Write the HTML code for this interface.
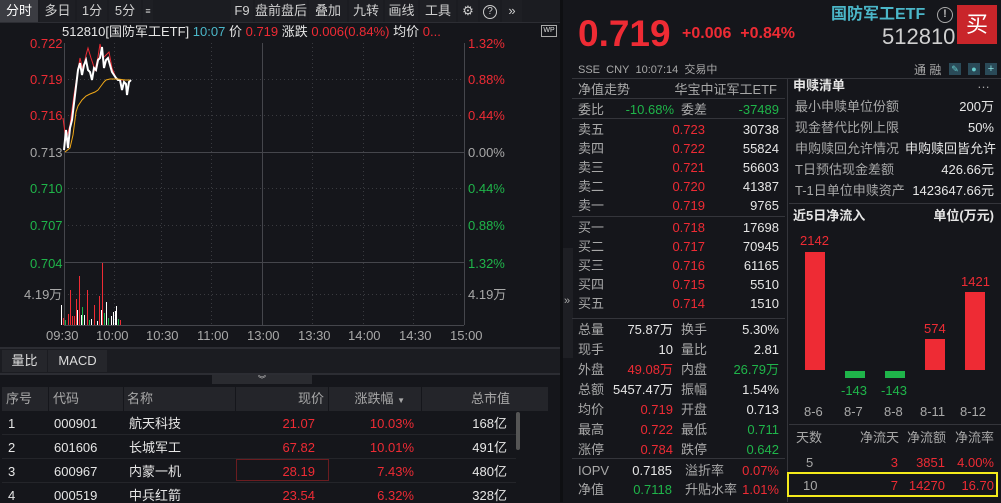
<!DOCTYPE html>
<html><head><meta charset="utf-8">
<style>
*{margin:0;padding:0;box-sizing:border-box}
body{width:1001px;height:502px;background:#15161b;font-family:"Liberation Sans","Noto Sans CJK SC",sans-serif;font-size:13px;color:#c8c8c8;position:relative;overflow:hidden}
.a{position:absolute;white-space:nowrap;line-height:1}
.r{color:#ee2b34}.g{color:#1fb54a}.w{color:#e6e6e6}.gr{color:#a8a8a8}.c{color:#4bb7c9}
.ra{text-align:right}
.hl{position:absolute;height:1px;background:#34353b}
.vl{position:absolute;width:1px;background:#34353b}
.btn{position:absolute;top:0;height:22px;line-height:22px;font-size:13px;color:#d0d0d0;text-align:center;background:#1e1f24}
</style></head><body>
<!-- toolbar -->
<div class="a" style="left:0;top:0;width:560px;height:22px;background:#1b1c21"></div>
<div class="btn" style="left:0;width:38px;background:#3b3c42;color:#fff">分时</div>
<div class="btn" style="left:40px;width:35px">多日</div>
<div class="btn" style="left:77px;width:30px">1分</div>
<div class="btn" style="left:109px;width:32px">5分</div>
<div class="btn" style="left:143px;width:10px;font-size:9px">≡</div>
<div class="btn" style="left:231px;width:22px">F9</div>
<div class="btn" style="left:255px;width:52px">盘前盘后</div>
<div class="btn" style="left:309px;width:38px">叠加</div>
<div class="btn" style="left:349px;width:34px">九转</div>
<div class="btn" style="left:385px;width:33px">画线</div>
<div class="btn" style="left:420px;width:36px">工具</div>
<div class="btn" style="left:458px;width:20px">⚙</div>
<div class="btn" style="left:480px;width:20px"><span style="display:inline-block;width:14px;height:14px;border:1px solid #ccc;border-radius:50%;line-height:12px;font-size:10px;vertical-align:middle">?</span></div>
<div class="btn" style="left:502px;width:20px">»</div>
<div class="a" style="left:0;top:22px;width:560px;height:1px;background:#2c2d33"></div>
<!-- chart header -->
<div class="a" style="left:62px;top:25px;font-size:13px"><span class="w">512810[国防军工ETF]</span> <span class="c">10:07</span> <span class="w">价</span> <span class="r">0.719</span> <span class="w">涨跌</span> <span class="r">0.006(0.84%)</span> <span class="w">均价</span> <span class="r">0...</span></div>
<div class="a" style="left:541px;top:25px;width:16px;height:12px;border:1px solid #aaa;font-size:7px;color:#ddd;text-align:center;line-height:10px">WP</div>
<!-- chart svg -->
<svg class="a" style="left:0;top:0" width="560" height="350">
<g stroke="#3a3b40" stroke-dasharray="1,3" stroke-width="1">
<line x1="64" y1="79.5" x2="464" y2="79.5"/><line x1="64" y1="115.5" x2="464" y2="115.5"/>
<line x1="64" y1="188.5" x2="464" y2="188.5"/><line x1="64" y1="225.5" x2="464" y2="225.5"/>
<line x1="64" y1="294.5" x2="464" y2="294.5"/>
<line x1="114.5" y1="43" x2="114.5" y2="325"/><line x1="161.5" y1="43" x2="161.5" y2="325"/><line x1="211.5" y1="43" x2="211.5" y2="325"/>
<line x1="312.5" y1="43" x2="312.5" y2="325"/><line x1="363.5" y1="43" x2="363.5" y2="325"/><line x1="413.5" y1="43" x2="413.5" y2="325"/>
</g>
<g stroke="#45464c" stroke-width="1">
<line x1="64" y1="152.5" x2="464" y2="152.5"/><line x1="64" y1="262.5" x2="464" y2="262.5"/>
<line x1="64" y1="325.5" x2="464" y2="325.5"/>
<line x1="64.5" y1="43" x2="64.5" y2="325"/><line x1="262.5" y1="43" x2="262.5" y2="325"/><line x1="464.5" y1="43" x2="464.5" y2="325"/>
</g>
<polyline fill="none" stroke="#ee2b34" stroke-width="1" points="63,118 66,140 70,125 74,95 78,70 80,58 83,70 86,55 88,48 91,58 95,70 98,57 100,44 103,58 106,55 109,52 112,68 116,78 120,80 124,80"/>
<polyline fill="none" stroke="#fff" stroke-width="2" points="64,150 66,130 68,148 70,128 72,120 75,95 78,70 80,63 82,75 84,65 86,60 88,70 90,72 92,80 94,68 96,70 98,60 100,58 102,47 104,68 106,60 108,58 110,65 112,72 114,75 116,78 118,80 120,80 122,90 124,82 126,84 127,95 129,82 131,80"/>
<polyline fill="none" stroke="#f0a818" stroke-width="1" points="65,152 70,148 73,135 76,112 78,106 82,100 86,96 90,94 95,92 98,90 101,86 104,82 106,80 110,79 118,79 125,80 130,80"/>
<g stroke-width="1">
<line x1="61.5" y1="305" x2="61.5" y2="325" stroke="#fff"/>
<line x1="63.5" y1="318" x2="63.5" y2="325" stroke="#ee2b34"/>
<line x1="65.5" y1="320" x2="65.5" y2="325" stroke="#1fb54a"/>
<line x1="68.5" y1="314" x2="68.5" y2="325" stroke="#ee2b34"/>
<line x1="70.5" y1="290" x2="70.5" y2="325" stroke="#ee2b34"/>
<line x1="72.5" y1="316" x2="72.5" y2="325" stroke="#ee2b34"/>
<line x1="74.5" y1="316" x2="74.5" y2="325" stroke="#ee2b34"/>
<line x1="76.5" y1="299" x2="76.5" y2="325" stroke="#ee2b34"/>
<line x1="77.5" y1="310" x2="77.5" y2="325" stroke="#fff"/>
<line x1="79.5" y1="276" x2="79.5" y2="325" stroke="#ee2b34"/>
<line x1="81.5" y1="315" x2="81.5" y2="325" stroke="#fff"/>
<line x1="82.5" y1="307" x2="82.5" y2="325" stroke="#1fb54a"/>
<line x1="84.5" y1="315" x2="84.5" y2="325" stroke="#fff"/>
<line x1="87.5" y1="290" x2="87.5" y2="325" stroke="#ee2b34"/>
<line x1="89.5" y1="320" x2="89.5" y2="325" stroke="#1fb54a"/>
<line x1="91.5" y1="319" x2="91.5" y2="325" stroke="#fff"/>
<line x1="94.5" y1="305" x2="94.5" y2="325" stroke="#ee2b34"/>
<line x1="97.5" y1="321" x2="97.5" y2="325" stroke="#fff"/>
<line x1="99.5" y1="296" x2="99.5" y2="325" stroke="#ee2b34"/>
<line x1="101.5" y1="310" x2="101.5" y2="325" stroke="#fff"/>
<line x1="102.5" y1="263" x2="102.5" y2="325" stroke="#ee2b34"/>
<line x1="104.5" y1="313" x2="104.5" y2="325" stroke="#1fb54a"/>
<line x1="106.5" y1="302" x2="106.5" y2="325" stroke="#fff"/>
<line x1="108.5" y1="318" x2="108.5" y2="325" stroke="#1fb54a"/>
<line x1="111.5" y1="316" x2="111.5" y2="325" stroke="#fff"/>
<line x1="113.5" y1="312" x2="113.5" y2="325" stroke="#fff"/>
<line x1="115.5" y1="311" x2="115.5" y2="325" stroke="#fff"/>
<line x1="116.5" y1="306" x2="116.5" y2="325" stroke="#fff"/>
<line x1="118.5" y1="319" x2="118.5" y2="325" stroke="#1fb54a"/>
<line x1="120.5" y1="320" x2="120.5" y2="325" stroke="#ee2b34"/>
</g>
</svg>
<div class="a r" style="left:30px;top:37px">0.722</div>
<div class="a r" style="left:30px;top:73px">0.719</div>
<div class="a r" style="left:30px;top:109px">0.716</div>
<div class="a gr" style="left:30px;top:146px">0.713</div>
<div class="a g" style="left:30px;top:182px">0.710</div>
<div class="a g" style="left:30px;top:219px">0.707</div>
<div class="a g" style="left:30px;top:257px">0.704</div>
<div class="a gr" style="left:24px;top:288px">4.19万</div>
<div class="a r" style="left:468px;top:37px">1.32%</div>
<div class="a r" style="left:468px;top:73px">0.88%</div>
<div class="a r" style="left:468px;top:109px">0.44%</div>
<div class="a gr" style="left:468px;top:146px">0.00%</div>
<div class="a g" style="left:468px;top:182px">0.44%</div>
<div class="a g" style="left:468px;top:219px">0.88%</div>
<div class="a g" style="left:468px;top:257px">1.32%</div>
<div class="a gr" style="left:468px;top:288px">4.19万</div>
<div class="a gr" style="left:46px;top:329px">09:30</div>
<div class="a gr" style="left:96px;top:329px">10:00</div>
<div class="a gr" style="left:146px;top:329px">10:30</div>
<div class="a gr" style="left:197px;top:329px">11:00</div>
<div class="a gr" style="left:247px;top:329px">13:00</div>
<div class="a gr" style="left:298px;top:329px">13:30</div>
<div class="a gr" style="left:348px;top:329px">14:00</div>
<div class="a gr" style="left:399px;top:329px">14:30</div>
<div class="a gr" style="left:450px;top:329px">15:00</div>
<!-- tabs -->
<div class="a" style="left:0;top:347px;width:560px;height:2px;background:#2c2d33"></div>
<div class="a" style="left:0;top:349px;width:560px;height:24px;background:#1b1c21"></div>
<div class="a" style="left:2px;top:350px;width:45px;height:22px;background:#25262b;color:#ddd;text-align:center;line-height:22px">量比</div>
<div class="a" style="left:48px;top:350px;width:59px;height:22px;background:#25262b;color:#ddd;text-align:center;line-height:22px">MACD</div>
<div class="a" style="left:0;top:373px;width:560px;height:2px;background:#2c2d33"></div>
<div class="a" style="left:212px;top:375px;width:100px;height:9px;background:#2a2b30;color:#ccc;font-size:8px;text-align:center;line-height:9px">︾</div>
<!-- table -->
<div class="a" style="left:2px;top:387px;width:546px;height:24px;background:#24252a"></div>
<div class="vl" style="left:48px;top:387px;height:24px;background:#15161b"></div>
<div class="vl" style="left:123px;top:387px;height:24px;background:#15161b"></div>
<div class="vl" style="left:235px;top:387px;height:24px;background:#15161b"></div>
<div class="vl" style="left:328px;top:387px;height:24px;background:#15161b"></div>
<div class="vl" style="left:421px;top:387px;height:24px;background:#15161b"></div>
<div class="a gr" style="left:6px;top:392px">序号</div>
<div class="a gr" style="left:53px;top:392px">代码</div>
<div class="a gr" style="left:127px;top:392px">名称</div>
<div class="a gr ra" style="left:260px;width:64px;top:392px">现价</div>
<div class="a gr ra" style="left:330px;width:75px;top:392px">涨跌幅 <span style="font-size:8px">▼</span></div>
<div class="a gr ra" style="left:430px;width:80px;top:392px">总市值</div>
<div class="hl" style="left:2px;top:434px;width:514px;background:#24252a"></div>
<div class="hl" style="left:2px;top:458px;width:514px;background:#24252a"></div>
<div class="hl" style="left:2px;top:482px;width:514px;background:#24252a"></div>
<div class="a" style="left:516px;top:412px;width:4px;height:38px;background:#555;border-radius:2px"></div>
<div class="a" style="left:236px;top:459px;width:93px;height:22px;border:1px solid #6b1c20"></div>
<div class="a w" style="left:8px;top:417px">1</div><div class="a w" style="left:54px;top:417px">000901</div><div class="a w" style="left:129px;top:417px">航天科技</div><div class="a r ra" style="left:250px;width:65px;top:417px">21.07</div><div class="a r ra" style="left:340px;width:74px;top:417px">10.03%</div><div class="a w ra" style="left:440px;width:67px;top:417px">168亿</div>
<div class="a w" style="left:8px;top:441px">2</div><div class="a w" style="left:54px;top:441px">601606</div><div class="a w" style="left:129px;top:441px">长城军工</div><div class="a r ra" style="left:250px;width:65px;top:441px">67.82</div><div class="a r ra" style="left:340px;width:74px;top:441px">10.01%</div><div class="a w ra" style="left:440px;width:67px;top:441px">491亿</div>
<div class="a w" style="left:8px;top:465px">3</div><div class="a w" style="left:54px;top:465px">600967</div><div class="a w" style="left:129px;top:465px">内蒙一机</div><div class="a r ra" style="left:250px;width:65px;top:465px">28.19</div><div class="a r ra" style="left:340px;width:74px;top:465px">7.43%</div><div class="a w ra" style="left:440px;width:67px;top:465px">480亿</div>
<div class="a w" style="left:8px;top:489px">4</div><div class="a w" style="left:54px;top:489px">000519</div><div class="a w" style="left:129px;top:489px">中兵红箭</div><div class="a r ra" style="left:250px;width:65px;top:489px">23.54</div><div class="a r ra" style="left:340px;width:74px;top:489px">6.32%</div><div class="a w ra" style="left:440px;width:67px;top:489px">328亿</div>
<!-- divider between panels -->
<div class="a" style="left:560px;top:0;width:3px;height:502px;background:#0e0f12"></div>
<div class="a" style="left:563px;top:248px;width:10px;height:110px;background:#1e1f24"></div>
<div class="a gr" style="left:564px;top:296px;font-size:11px">»</div>
<!-- right header -->
<div class="a r" style="left:578px;top:15px;font-size:37px;font-weight:bold">0.719</div>
<div class="a r" style="left:682px;top:26px;font-size:16px;font-weight:bold">+0.006&nbsp; +0.84%</div>
<div class="a c" style="left:831px;top:7px;font-size:16px;font-weight:bold">国防军工ETF</div>
<div class="a" style="left:937px;top:7px;width:16px;height:16px;border:1.5px solid #aaa;border-radius:50%;color:#bbb;font-size:11px;text-align:center;line-height:13px;font-weight:bold">!</div>
<div class="a" style="left:882px;top:26px;font-size:22px;color:#d0d0d0">512810</div>
<div class="a" style="left:957px;top:5px;width:40px;height:39px;background:#c9252a;color:#fff;font-size:22px;text-align:center;line-height:39px">买</div>
<div class="a gr" style="left:578px;top:65px;font-size:11px">SSE&nbsp; CNY&nbsp; 10:07:14&nbsp; 交易中</div>
<div class="a gr" style="left:914px;top:64px;font-size:12px">通 融</div>
<div class="a" style="left:949px;top:63px;width:12px;height:12px;background:#2a4a58;color:#6cc;font-size:9px;text-align:center;line-height:12px">✎</div>
<div class="a" style="left:968px;top:63px;width:12px;height:12px;background:#2a4a58;color:#6cc;font-size:9px;text-align:center;line-height:12px">●</div>
<div class="a" style="left:985px;top:63px;width:12px;height:12px;background:#2a4a58;color:#8dd;font-size:11px;text-align:center;line-height:12px">+</div>
<div class="hl" style="left:572px;top:78px;width:429px"></div>
<div class="vl" style="left:787px;top:78px;height:424px"></div>
<!-- order book -->
<div class="a gr" style="left:578px;top:83px">净值走势</div><div class="a gr ra" style="left:660px;width:117px;top:83px">华宝中证军工ETF</div>
<div class="hl" style="left:572px;top:98px;width:213px"></div>
<div class="a gr" style="left:578px;top:103px">委比</div><div class="a g ra" style="left:600px;width:74px;top:103px">-10.68%</div><div class="a gr" style="left:681px;top:103px">委差</div><div class="a g ra" style="left:700px;width:79px;top:103px">-37489</div>
<div class="hl" style="left:572px;top:118px;width:213px"></div>
<div class="a gr" style="left:578px;top:123px">卖五</div><div class="a r ra" style="left:640px;width:65px;top:123px">0.723</div><div class="a w ra" style="left:710px;width:69px;top:123px">30738</div>
<div class="a gr" style="left:578px;top:142px">卖四</div><div class="a r ra" style="left:640px;width:65px;top:142px">0.722</div><div class="a w ra" style="left:710px;width:69px;top:142px">55824</div>
<div class="a gr" style="left:578px;top:161px">卖三</div><div class="a r ra" style="left:640px;width:65px;top:161px">0.721</div><div class="a w ra" style="left:710px;width:69px;top:161px">56603</div>
<div class="a gr" style="left:578px;top:180px">卖二</div><div class="a r ra" style="left:640px;width:65px;top:180px">0.720</div><div class="a w ra" style="left:710px;width:69px;top:180px">41387</div>
<div class="a gr" style="left:578px;top:199px">卖一</div><div class="a r ra" style="left:640px;width:65px;top:199px">0.719</div><div class="a w ra" style="left:710px;width:69px;top:199px">9765</div>
<div class="hl" style="left:572px;top:216px;width:213px"></div>
<div class="a gr" style="left:578px;top:221px">买一</div><div class="a r ra" style="left:640px;width:65px;top:221px">0.718</div><div class="a w ra" style="left:710px;width:69px;top:221px">17698</div>
<div class="a gr" style="left:578px;top:240px">买二</div><div class="a r ra" style="left:640px;width:65px;top:240px">0.717</div><div class="a w ra" style="left:710px;width:69px;top:240px">70945</div>
<div class="a gr" style="left:578px;top:259px">买三</div><div class="a r ra" style="left:640px;width:65px;top:259px">0.716</div><div class="a w ra" style="left:710px;width:69px;top:259px">61165</div>
<div class="a gr" style="left:578px;top:278px">买四</div><div class="a r ra" style="left:640px;width:65px;top:278px">0.715</div><div class="a w ra" style="left:710px;width:69px;top:278px">5510</div>
<div class="a gr" style="left:578px;top:297px">买五</div><div class="a r ra" style="left:640px;width:65px;top:297px">0.714</div><div class="a w ra" style="left:710px;width:69px;top:297px">1510</div>
<div class="hl" style="left:572px;top:318px;width:213px"></div>
<div class="a gr" style="left:578px;top:323px">总量</div><div class="a w ra" style="left:600px;width:73px;top:323px">75.87万</div><div class="a gr" style="left:681px;top:323px">换手</div><div class="a w ra" style="left:710px;width:69px;top:323px">5.30%</div>
<div class="a gr" style="left:578px;top:343px">现手</div><div class="a w ra" style="left:600px;width:73px;top:343px">10</div><div class="a gr" style="left:681px;top:343px">量比</div><div class="a w ra" style="left:710px;width:69px;top:343px">2.81</div>
<div class="a gr" style="left:578px;top:363px">外盘</div><div class="a r ra" style="left:600px;width:73px;top:363px">49.08万</div><div class="a gr" style="left:681px;top:363px">内盘</div><div class="a g ra" style="left:700px;width:79px;top:363px">26.79万</div>
<div class="a gr" style="left:578px;top:383px">总额</div><div class="a w ra" style="left:600px;width:73px;top:383px">5457.47万</div><div class="a gr" style="left:681px;top:383px">振幅</div><div class="a w ra" style="left:710px;width:69px;top:383px">1.54%</div>
<div class="a gr" style="left:578px;top:403px">均价</div><div class="a r ra" style="left:600px;width:73px;top:403px">0.719</div><div class="a gr" style="left:681px;top:403px">开盘</div><div class="a w ra" style="left:710px;width:69px;top:403px">0.713</div>
<div class="a gr" style="left:578px;top:423px">最高</div><div class="a r ra" style="left:600px;width:73px;top:423px">0.722</div><div class="a gr" style="left:681px;top:423px">最低</div><div class="a g ra" style="left:710px;width:69px;top:423px">0.711</div>
<div class="a gr" style="left:578px;top:443px">涨停</div><div class="a r ra" style="left:600px;width:73px;top:443px">0.784</div><div class="a gr" style="left:681px;top:443px">跌停</div><div class="a g ra" style="left:710px;width:69px;top:443px">0.642</div>
<div class="hl" style="left:572px;top:458px;width:213px"></div>
<div class="a gr" style="left:578px;top:464px">IOPV</div><div class="a w ra" style="left:600px;width:72px;top:464px">0.7185</div><div class="a gr" style="left:685px;top:464px">溢折率</div><div class="a r ra" style="left:710px;width:69px;top:464px">0.07%</div>
<div class="a gr" style="left:578px;top:483px">净值</div><div class="a g ra" style="left:600px;width:72px;top:483px">0.7118</div><div class="a gr" style="left:685px;top:483px">升贴水率</div><div class="a r ra" style="left:710px;width:69px;top:483px">1.01%</div>
<!-- right panel -->
<div class="a w" style="left:793px;top:79px;font-weight:bold">申赎清单</div><div class="a gr" style="left:977px;top:77px">…</div>
<div class="a gr" style="left:795px;top:100px">最小申赎单位份额</div><div class="a w ra" style="left:900px;width:94px;top:100px">200万</div>
<div class="a gr" style="left:795px;top:121px">现金替代比例上限</div><div class="a w ra" style="left:900px;width:94px;top:121px">50%</div>
<div class="a gr" style="left:795px;top:142px">申购赎回允许情况</div><div class="a w ra" style="left:900px;width:96px;top:142px">申购赎回皆允许</div>
<div class="a gr" style="left:795px;top:163px">T日预估现金差额</div><div class="a w ra" style="left:900px;width:94px;top:163px">426.66元</div>
<div class="a gr" style="left:795px;top:184px">T-1日单位申赎资产</div><div class="a w ra" style="left:900px;width:94px;top:184px">1423647.66元</div>
<div class="hl" style="left:789px;top:203px;width:212px"></div>
<div class="a w" style="left:793px;top:209px;font-weight:bold">近5日净流入</div><div class="a w ra" style="left:900px;width:94px;top:209px;font-weight:bold">单位(万元)</div>
<div class="a" style="left:805px;top:252px;width:20px;height:118px;background:#ee2b34"></div>
<div class="a" style="left:845px;top:371px;width:20px;height:7px;background:#1fb54a"></div>
<div class="a" style="left:885px;top:371px;width:20px;height:7px;background:#1fb54a"></div>
<div class="a" style="left:925px;top:339px;width:20px;height:31px;background:#ee2b34"></div>
<div class="a" style="left:965px;top:292px;width:20px;height:78px;background:#ee2b34"></div>
<div class="a r" style="left:800px;top:234px">2142</div>
<div class="a g" style="left:841px;top:384px">-143</div>
<div class="a g" style="left:881px;top:384px">-143</div>
<div class="a r" style="left:924px;top:322px">574</div>
<div class="a r" style="left:961px;top:275px">1421</div>
<div class="a gr" style="left:804px;top:405px">8-6</div>
<div class="a gr" style="left:844px;top:405px">8-7</div>
<div class="a gr" style="left:884px;top:405px">8-8</div>
<div class="a gr" style="left:920px;top:405px">8-11</div>
<div class="a gr" style="left:960px;top:405px">8-12</div>
<div class="hl" style="left:789px;top:424px;width:212px"></div>
<div class="a gr" style="left:796px;top:431px">天数</div><div class="a gr" style="left:860px;top:431px">净流天</div><div class="a gr" style="left:907px;top:431px">净流额</div><div class="a gr" style="left:955px;top:431px">净流率</div>
<div class="a gr" style="left:806px;top:456px">5</div><div class="a r ra" style="left:860px;width:38px;top:456px">3</div><div class="a r ra" style="left:900px;width:45px;top:456px">3851</div><div class="a r ra" style="left:945px;width:49px;top:456px">4.00%</div>
<div class="a" style="left:787px;top:472px;width:211px;height:25px;border:2px solid #f4ea1c"></div>
<div class="a gr" style="left:803px;top:479px">10</div><div class="a r ra" style="left:860px;width:38px;top:479px">7</div><div class="a r ra" style="left:900px;width:45px;top:479px">14270</div><div class="a r ra" style="left:945px;width:49px;top:479px">16.70</div>
</body></html>
